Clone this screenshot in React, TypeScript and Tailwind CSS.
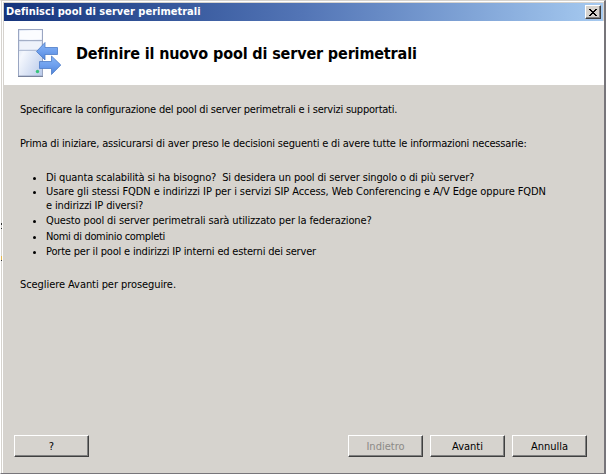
import type { ReactNode } from 'react';

function ServerIcon() {
  return (
    <svg width="48" height="52" viewBox="0 0 48 52" className="block shrink-0">
      <defs>
        <linearGradient id="front" x1="0" y1="0" x2="1" y2="1">
          <stop offset="0" stopColor="#c3d2ea" />
          <stop offset="0.35" stopColor="#f4f7fd" />
          <stop offset="1" stopColor="#b9caea" />
        </linearGradient>
        <linearGradient id="arrow" x1="0" y1="0" x2="0" y2="1">
          <stop offset="0" stopColor="#86b4f4" />
          <stop offset="0.5" stopColor="#6fa0ee" />
          <stop offset="1" stopColor="#4f84da" />
        </linearGradient>
      </defs>
      <rect x="2.5" y="3.5" width="24" height="46.5" fill="url(#front)" stroke="#9aa6c2" />
      <rect x="3.5" y="4.5" width="22" height="9" fill="#fbfcff" />
      <path d="M3 14.5H26" stroke="#a3aec6" />
      <rect x="3.5" y="15.5" width="22" height="8" fill="#eef2fa" stroke="#d5deef" strokeWidth="0.6" />
      <path d="M3 24.5H26" stroke="#b4bfd6" />
      <path d="M2 50.5H27" stroke="#77829c" />
      <circle cx="21.5" cy="45.5" r="1.7" fill="#39c47a" />
      <path d="M20.5 25.5L29 16.5V21.5H41.5V28.5H29V34Z" fill="url(#arrow)" stroke="#4c7bc6" strokeWidth="0.8" />
      <path d="M44.8 39L35.5 30V35.5H23.5V42.5H35.5V48.5Z" fill="url(#arrow)" stroke="#4c7bc6" strokeWidth="0.8" />
    </svg>
  );
}

function Button({ children, disabled = false }: { children: ReactNode; disabled?: boolean }) {
  return (
    <button
      disabled={disabled}
      className={`h-[22px] w-[75px] border border-t-white border-l-white border-r-[#404040] border-b-[#404040] bg-[#d6d3ce] pt-px text-center leading-[20px] shadow-[inset_-1px_-1px_0_#808080] ${
        disabled ? 'text-[#8c8a87]' : 'text-black'
      }`}
    >
      {children}
    </button>
  );
}

function Item({ children, className }: { children: ReactNode; className: string }) {
  return (
    <li className={`flex ${className}`}>
      <span className="mt-[6px] mr-[10px] size-[3px] shrink-0 rounded-full bg-black" />
      <div>{children}</div>
    </li>
  );
}

export default function App() {
  return (
    <div className="relative flex h-[474px] w-[606px] flex-col overflow-hidden border-t border-r-2 border-b border-l border-t-[#d6d3ce] border-r-[#77757a] border-b-[#77757a] border-l-white bg-[#d6d3ce] font-['DejaVu_Sans_Condensed','DejaVu_Sans',sans-serif] text-[11px] leading-[14px] whitespace-nowrap text-black [font-stretch:condensed]">
      <span className="absolute top-[222px] -left-px h-[2px] w-[2px] bg-[#333]" />
      <span className="absolute top-[227px] -left-px h-px w-[2px] bg-[#333]" />
      <span className="absolute top-[255px] -left-px h-[4px] w-[2px] bg-[#e3b84f]" />
      <span className="absolute top-[259px] -left-px h-px w-[2px] bg-[#333]" />
      <div className="ml-px flex grow flex-col border-t border-l border-white">
        <div className="mt-px mr-px ml-px flex h-[18px] items-center justify-between bg-linear-to-r from-[#15347c] via-[#5375b6] to-[#a6caf0] pr-[2px] pl-[2px] font-bold text-white">
          <span className="tracking-[0.01px]">Definisci pool di server perimetrali</span>
          <button className="flex h-[14px] w-4 items-center justify-center border border-t-white border-l-white border-r-[#404040] border-b-[#404040] bg-[#d6d3ce] shadow-[inset_-1px_-1px_0_#808080]">
            <svg width="8" height="7" viewBox="0 0 8 7" shapeRendering="crispEdges">
              <path d="M0 0h2v1h1v1h2v-1h1v-1h2v1h-1v1h-1v1h-1v1h1v1h1v1h1v1h-2v-1h-1v-1h-2v1h-1v1h-2v-1h1v-1h1v-1h1v-1h-1v-1h-1v-1h-1z" fill="#000" />
            </svg>
          </button>
        </div>
        <header className="ml-px flex h-[64px] bg-white pt-[5px] pl-3">
          <ServerIcon />
          <h1 className="mt-[18px] ml-[12px] text-[16px] leading-[20px] font-bold tracking-[-0.14px]">Definire il nuovo pool di server perimetrali</h1>
        </header>
        <main className="grow pt-[18px] pl-[17px]">
          <p className="tracking-[-0.23px]">Specificare la configurazione del pool di server perimetrali e i servizi supportati.</p>
          <p className="mt-5 tracking-[-0.18px]">Prima di iniziare, assicurarsi di aver preso le decisioni seguenti e di avere tutte le informazioni necessarie:</p>
          <ul className="mt-5 pl-[13px]">
            <Item className="h-[14px] tracking-[-0.14px]">Di quanta scalabilità si ha bisogno?&nbsp; Si desidera un pool di server singolo o di più server?</Item>
            <Item className="h-[29px]">
              <span className="tracking-[-0.08px]">Usare gli stessi FQDN e indirizzi IP per i servizi SIP Access, Web Conferencing e A/V Edge oppure FQDN</span><br />
              <span className="tracking-[-0.15px]">e indirizzi IP diversi?</span>
            </Item>
            <Item className="h-4 tracking-[-0.13px]">Questo pool di server perimetrali sarà utilizzato per la federazione?</Item>
            <Item className="h-[15px] tracking-[-0.34px]">Nomi di dominio completi</Item>
            <Item className="h-[14px] tracking-[-0.18px]">Porte per il pool e indirizzi IP interni ed esterni dei server</Item>
          </ul>
          <p className="mt-[19px] tracking-[-0.07px]">Scegliere Avanti per proseguire.</p>
        </main>
        <footer className="flex shrink-0 gap-[7px] pr-[17px] pb-4 pl-[11px]">
          <div className="grow"><Button>?</Button></div>
          <Button disabled>Indietro</Button>
          <Button>Avanti</Button>
          <Button>Annulla</Button>
        </footer>
      </div>
    </div>
  );
}
